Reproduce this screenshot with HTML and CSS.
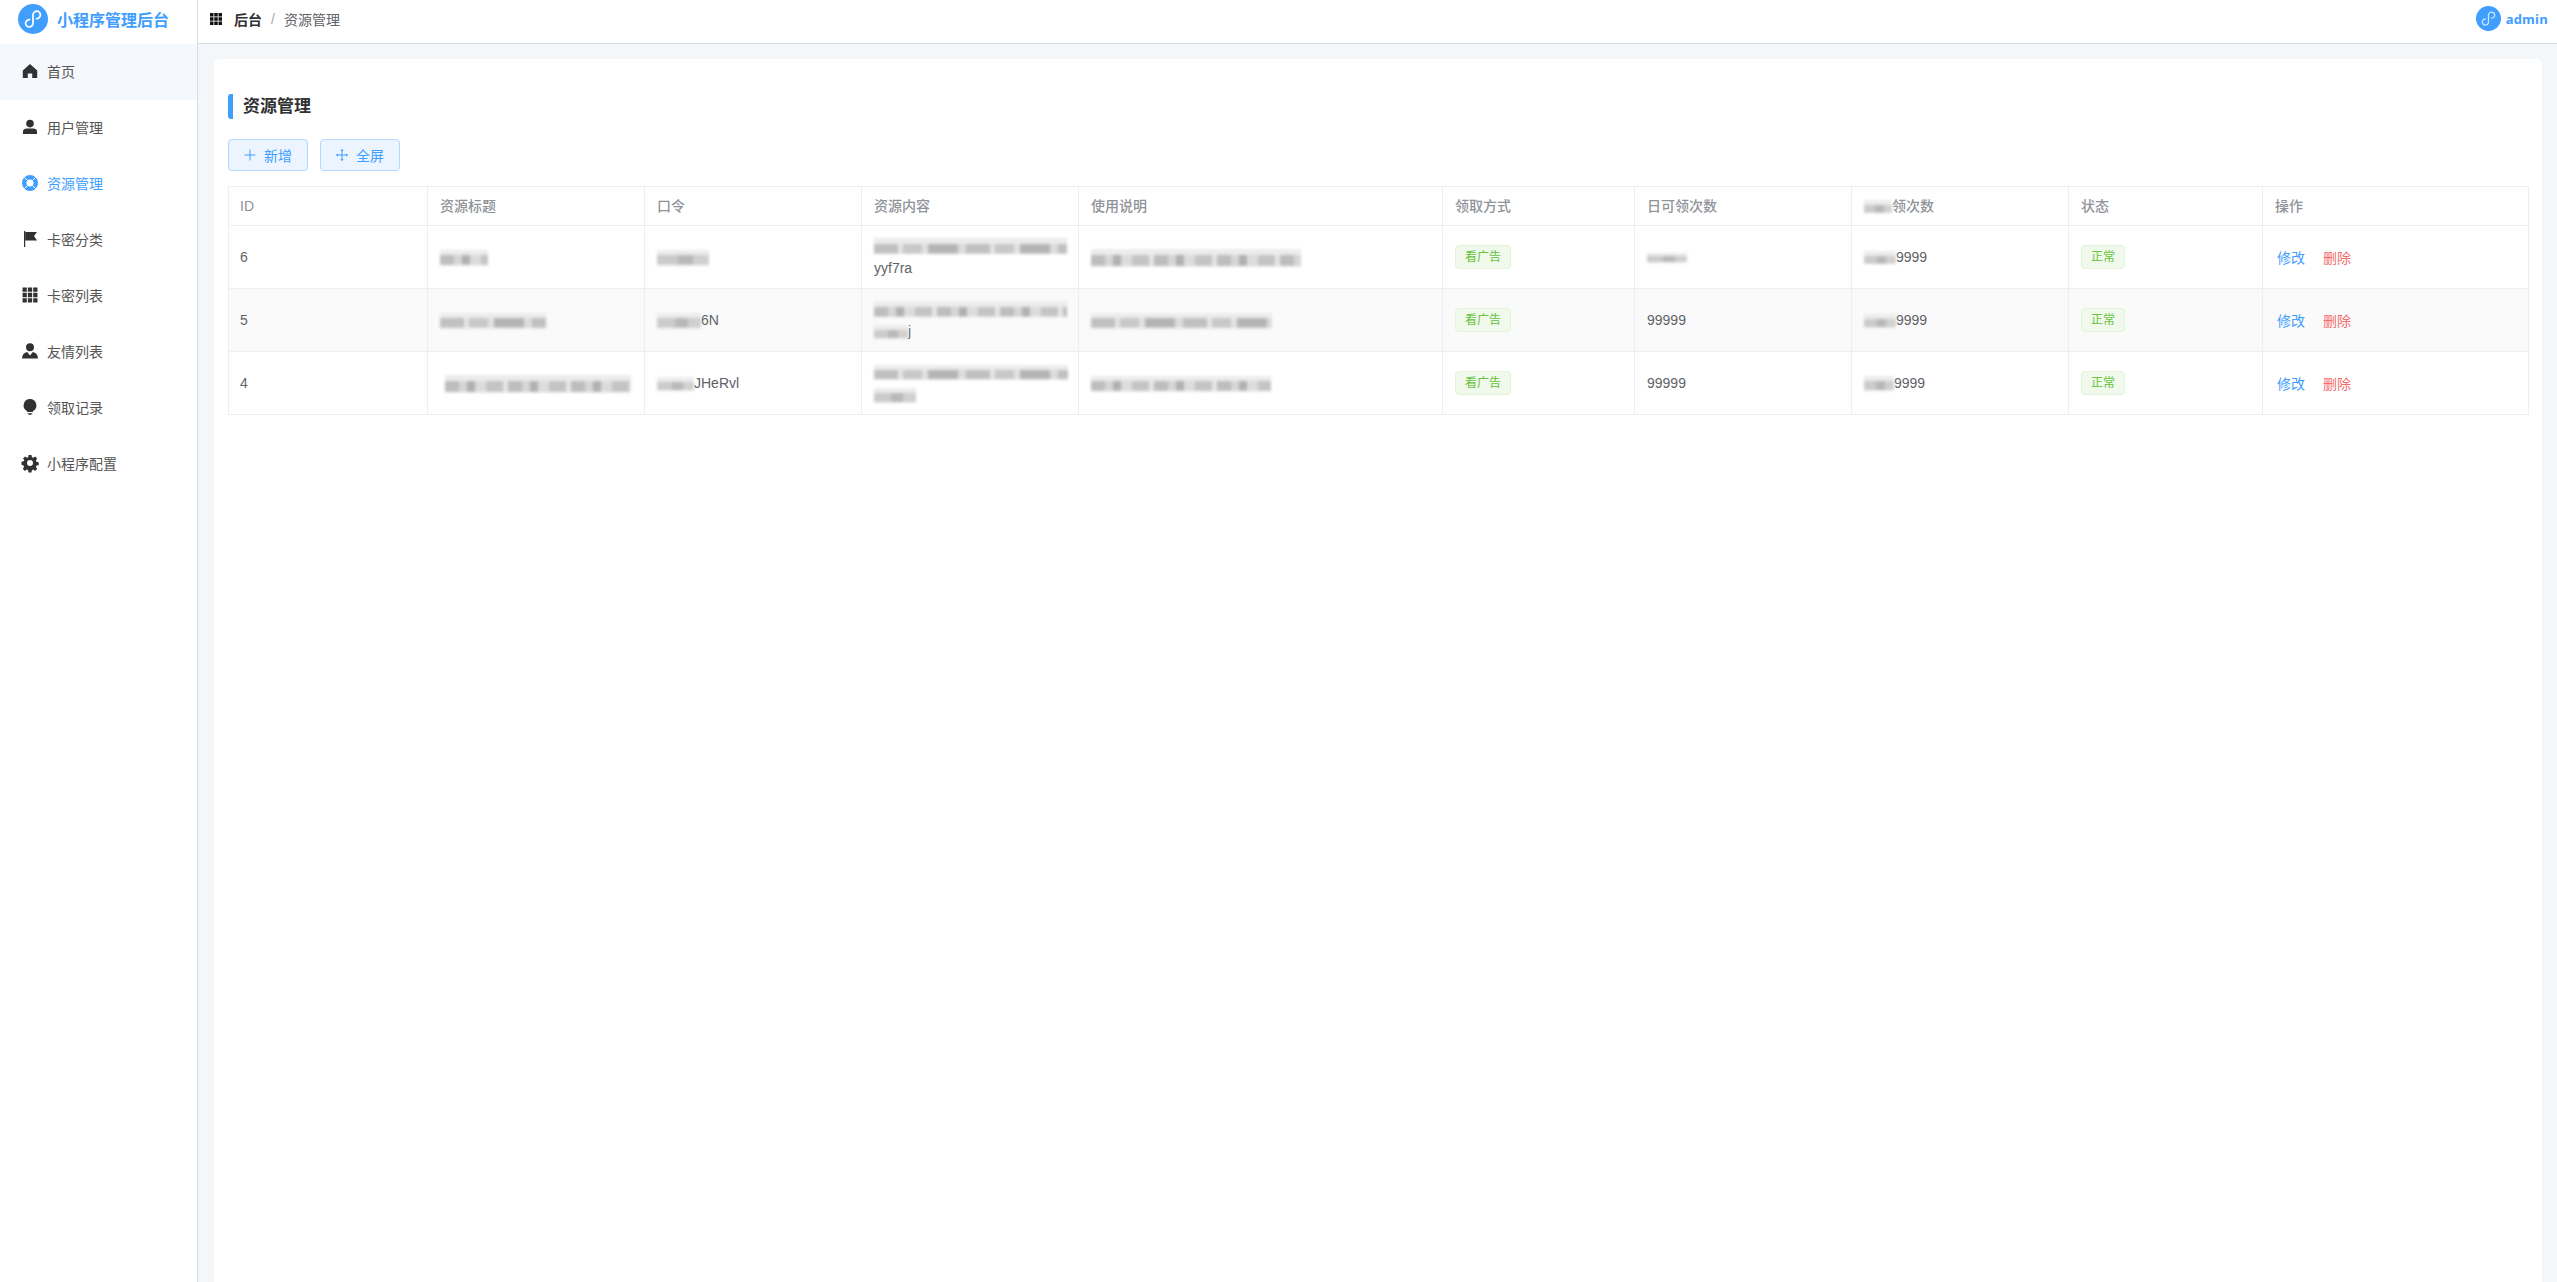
FILE: index.html
```html
<!DOCTYPE html>
<html lang="zh-CN">
<head>
<meta charset="utf-8">
<title>资源管理</title>
<link rel="stylesheet" href="styles.css">
</head>
<body>
<div class="app">
  <aside class="sidebar">
    <div class="brand">
      <svg class="logo" viewBox="0 0 30 30"><circle cx="15" cy="15" r="15" fill="#409eff"/><path d="M11.500 15.600a3.700 3.700 0 1 0 3.500 3.700v-8.400a3.700 3.700 0 1 1 3.500 3.700" fill="none" stroke="#fff" stroke-width="1.700" stroke-linecap="round"/></svg>
      <span class="brand-name">小程序管理后台</span>
    </div>
    <nav class="menu">
      <a class="menu-item is-home"><svg class="mi" viewBox="0 0 16 16"><path d="M8 1 .8 7.600V15h5v-4.600h4.400V15h5V7.600z"/></svg><span>首页</span></a>
      <a class="menu-item"><svg class="mi" viewBox="0 0 16 16"><circle cx="8" cy="4.600" r="3.800"/><path d="M1 15v-2.400C1 10.400 3 9.600 4.600 9.600h6.800c1.600 0 3.600.8 3.600 3V15z"/></svg><span>用户管理</span></a>
      <a class="menu-item is-active"><svg class="mi" viewBox="0 0 16 16"><path fill-rule="evenodd" d="M8 0a8 8 0 1 1 0 16A8 8 0 0 1 8 0zm0 4.500a3.500 3.500 0 1 0 0 7 3.500 3.500 0 0 0 0-7z"/><path d="M2.500 2.500l3 3M13.500 2.500l-3 3M2.500 13.500l3-3M13.500 13.500l-3-3" stroke="#fff" stroke-width="1"/></svg><span>资源管理</span></a>
      <a class="menu-item"><svg class="mi" viewBox="0 0 16 16"><path d="M2 0h1.200v16H2z"/><path d="M3.200 1H15l-3 4 3 4.500H3.200z"/></svg><span>卡密分类</span></a>
      <a class="menu-item"><svg class="mi" viewBox="0 0 15 15"><path d="M.5.500h4v4h-4zM5.500.500h4v4h-4zM10.500.500h4v4h-4zM.5 5.500h4v4h-4zM5.500 5.500h4v4h-4zM10.500 5.500h4v4h-4zM.5 10.500h4v4h-4zM5.500 10.500h4v4h-4zM10.500 10.500h4v4h-4z"/></svg><span>卡密列表</span></a>
      <a class="menu-item"><svg class="mi" viewBox="0 0 16 16"><circle cx="8" cy="4.200" r="4"/><path d="M0 15.500c.4-4 2-6 5.200-6.500L8 12.500 10.800 9c3.200.5 4.800 2.500 5.200 6.500z"/></svg><span>友情列表</span></a>
      <a class="menu-item"><svg class="mi" viewBox="0 0 16 16"><path d="M8 0a6.400 6.400 0 0 1 3.400 11.800c-.4.300-.6.700-.6 1.200H5.200c0-.5-.2-.9-.6-1.200A6.400 6.400 0 0 1 8 0z"/><path d="M5.600 14h4.800v.8H5.600zM6.500 15.300h3V16h-3z"/></svg><span>领取记录</span></a>
      <a class="menu-item"><svg class="mi" viewBox="0 0 16 16"><path fill-rule="evenodd" d="M6.500 0h3l.4 2.200 1.300.6L13.100 1.500l2.100 2.100-1.300 1.900.6 1.300 2.200.4v3l-2.200.4-.6 1.300 1.300 1.900-2.100 2.100-1.900-1.300-1.300.6-.4 2.200h-3l-.4-2.200-1.300-.6-1.900 1.300-2.100-2.100 1.300-1.900-.6-1.300L-.5 9.700v-3l2.200-.4.6-1.300L1 3.600l2.100-2.100 1.900 1.300 1.300-.6zM8 5a3 3 0 1 0 0 6 3 3 0 0 0 0-6z"/></svg><span>小程序配置</span></a>
    </nav>
  </aside>
  <main class="main">
    <header class="topbar">
      <div class="crumbs">
        <svg class="crumb-icon" viewBox="0 0 12 12"><path d="M0 0h3.500v3.500H0zM4.250 0h3.500v3.500h-3.500zM8.500 0H12v3.500H8.500zM0 4.250h3.500v3.500H0zM4.250 4.250h3.500v3.500h-3.500zM8.500 4.250H12v3.500H8.500zM0 8.500h3.500V12H0zM4.250 8.500h3.500V12h-3.500zM8.500 8.500H12V12H8.500z"/></svg>
        <b class="crumb-root">后台</b><span class="crumb-sep">/</span><span class="crumb-cur">资源管理</span>
      </div>
      <div class="account">
        <svg class="avatar" viewBox="0 0 30 30"><circle cx="15" cy="15" r="15" fill="#409eff"/><path d="M11.500 15.600a3.700 3.700 0 1 0 3.500 3.700v-8.400a3.700 3.700 0 1 1 3.500 3.700" fill="none" stroke="#cfe6ff" stroke-width="1.500" stroke-linecap="round"/></svg>
        <span class="account-name">admin</span>
      </div>
    </header>
    <section class="content">
      <div class="card">
        <h1 class="title">资源管理</h1>
        <div class="toolbar">
          <button class="btn"><svg class="btn-icon" viewBox="0 0 12 12"><path d="M6 .5v11M.5 6h11" stroke="#409eff" stroke-width="1" fill="none"/></svg>新增</button>
          <button class="btn"><svg class="btn-icon" viewBox="0 0 12 12"><path d="M6 .5v11M.5 6h11" stroke="#409eff" stroke-width="1" fill="none"/><path d="M6 0 4.400 2h3.200zM6 12l-1.600-2h3.200zM0 6l2-1.600v3.200zM12 6l-2-1.600v3.200z" fill="#409eff"/></svg>全屏</button>
        </div>
        <table class="grid">
          <colgroup>
            <col class="c1"><col class="c2"><col class="c2"><col class="c2"><col class="c5"><col class="c6"><col class="c2"><col class="c2"><col class="c9"><col class="c10">
          </colgroup>
          <thead>
            <tr><th>ID</th><th>资源标题</th><th>口令</th><th>资源内容</th><th>使用说明</th><th>领取方式</th><th>日可领次数</th><th><i class="m w28 h13 p2"></i>领次数</th><th>状态</th><th>操作</th></tr>
          </thead>
          <tbody>
            <tr>
              <td>6</td>
              <td><i class="m w48 p1"></i></td>
              <td><i class="m w52 p2"></i></td>
              <td><i class="m w193 p3"></i><br>yyf7ra</td>
              <td><i class="m w210 h18 p1"></i></td>
              <td><span class="tag">看广告</span></td>
              <td><i class="m w40 h10 p2"></i></td>
              <td><i class="m w32 h13 p2"></i>9999</td>
              <td><span class="tag">正常</span></td>
              <td><a class="act edit">修改</a><a class="act del">删除</a></td>
            </tr>
            <tr class="even">
              <td>5</td>
              <td><i class="m w106 p3"></i></td>
              <td><i class="m w44 p2"></i>6N</td>
              <td><i class="m w193 p1"></i><br><i class="m w34 h14 p2"></i>j</td>
              <td><i class="m w181 p3"></i></td>
              <td><span class="tag">看广告</span></td>
              <td>99999</td>
              <td><i class="m w32 h14 p2"></i>9999</td>
              <td><span class="tag">正常</span></td>
              <td><a class="act edit">修改</a><a class="act del">删除</a></td>
            </tr>
            <tr>
              <td>4</td>
              <td><i class="m w186 h18 ml5 p1"></i></td>
              <td><i class="m w37 h14 p2"></i>JHeRvl</td>
              <td><i class="m w194 h15 p3"></i><br><i class="m w42 h15 p2"></i></td>
              <td><i class="m w180 p1"></i></td>
              <td><span class="tag">看广告</span></td>
              <td>99999</td>
              <td><i class="m w30 h15 p2"></i>9999</td>
              <td><span class="tag">正常</span></td>
              <td><a class="act edit">修改</a><a class="act del">删除</a></td>
            </tr>
          </tbody>
        </table>
      </div>
    </section>
  </main>
</div>
</body>
</html>
```

FILE: styles.css
```css
* { box-sizing: border-box; }
html, body { height: 100%; margin: 0; }
body {
  font-family: "Liberation Sans", "Noto Sans CJK SC", sans-serif;
  font-size: 14px;
  color: #606266;
  background: #f4f7f9;
  overflow: hidden;
}
.app { display: flex; height: 100vh; }

/* sidebar */
.sidebar {
  flex: 0 0 198px;
  background: #fff;
  border-right: 1px solid #d8dce5;
}
.brand {
  height: 44px;
  display: flex;
  align-items: center;
  gap: 9px;
  padding: 0 0 6px 18px;
}
.logo { width: 30px; height: 30px; flex: none; }
.brand-name { font-size: 16px; font-weight: 700; color: #409eff; white-space: nowrap; }
.menu { display: flex; flex-direction: column; }
.menu-item {
  height: 56px;
  display: flex;
  align-items: center;
  gap: 9px;
  padding: 0 0 2px 22px;
  color: #555;
  font-size: 14px;
}
.menu-item.is-home { background: #f5f8fd; }
.menu-item.is-active { color: #409eff; }
.mi { width: 16px; height: 16px; flex: none; fill: #303133; overflow: visible; }
.is-active .mi { fill: #409eff; }

/* top bar */
.main { flex: 1; min-width: 0; display: flex; flex-direction: column; }
.topbar {
  flex: 0 0 44px;
  background: #fff;
  border-bottom: 1px solid #d8dce5;
  display: flex;
  align-items: center;
  justify-content: space-between;
  padding: 0 9px 6px 12px;
}
.crumbs { display: flex; align-items: center; }
.crumb-icon { width: 12px; height: 12px; fill: #111; margin-right: 12px; }
.crumb-root { font-weight: 700; color: #303133; }
.crumb-sep { color: #aaa; margin: 0 9px; }
.crumb-cur { color: #606266; }
.account { display: flex; align-items: center; gap: 5px; }
.avatar { width: 25px; height: 25px; }
.account-name { font-weight: 700; font-family: "Open Sans", "Liberation Sans", sans-serif; font-size: 13px; color: #409eff; letter-spacing: .2px; }

/* card */
.content { flex: 1; min-height: 0; padding: 15px 15px 0 16px; }
.card {
  height: 100%;
  background: #fff;
  border-radius: 6px 6px 0 0;
  padding: 35px 14px 0;
}
.title {
  margin: 0;
  height: 25px;
  line-height: 25px;
  padding-left: 10px;
  border-left: 5px solid #409eff;
  border-radius: 3px 0 0 3px;
  font-size: 17px;
  font-weight: 700;
  color: #303133;
}
.toolbar { display: flex; gap: 12px; margin: 20px 0 15px; }
.btn {
  width: 80px;
  height: 32px;
  display: flex;
  align-items: center;
  justify-content: center;
  gap: 8px;
  padding: 0;
  background: #ecf5ff;
  border: 1px solid #b3d8ff;
  border-radius: 4px;
  color: #409eff;
  font: inherit;
}
.btn-icon { width: 12px; height: 12px; }

/* table */
.grid { width: 2300px; table-layout: fixed; border-collapse: collapse; line-height: 23px; }
.c1 { width: 199px; }
.c2 { width: 217px; }
.c5 { width: 364px; }
.c6 { width: 192px; }
.c9 { width: 194px; }
.c10 { width: 266px; }
.grid th, .grid td {
  border: 1px solid #ebeef5;
  padding: 0 12px;
  text-align: left;
  vertical-align: middle;
  white-space: nowrap;
}
.grid th:first-child, .grid td:first-child { padding-left: 11px; }
.grid th { height: 39px; font-weight: 500; color: #909399; }
.grid td { height: 63px; }
.even td { background: #fafafa; }
.tag {
  display: inline-block;
  height: 24px;
  line-height: 22px;
  padding: 0 9px;
  font-size: 12px;
  color: #67c23a;
  background: #f0f9eb;
  border: 1px solid #e1f3d8;
  border-radius: 4px;
}
.act { display: inline-block; margin-top: 3px; }
.edit { color: #409eff; margin-left: 2px; margin-right: 18px; }
.del { color: #f56c6c; }

/* redacted (mosaic) text */
.m {
  display: inline-block;
  height: 16px;
  vertical-align: middle;
  filter: blur(1.5px);
  background-color: #ececec;
  background-size: 100% 60%;
  background-position: 0 85%;
  background-repeat: no-repeat;
}
.p1 { background-image: repeating-linear-gradient(90deg, #bdbdbd 0 14px, #d6d6d6 14px 22px, #b0b0b0 22px 30px, #dcdcdc 30px 41px, #c4c4c4 41px 58px, #e6e6e6 58px 63px); }
.p2 { background-image: linear-gradient(90deg, #cbcbcb 0 40%, #b8b8b8 40% 70%, #d0d0d0 70% 100%); }
.p3 { background-image: repeating-linear-gradient(90deg, #c0c0c0 0 24px, #e4e4e4 24px 29px, #c8c8c8 29px 48px, #e2e2e2 48px 54px, #b4b4b4 54px 84px, #dcdcdc 84px 92px); }
.h10 { height: 10px; }
.h13 { height: 13px; }
.h14 { height: 14px; }
.h15 { height: 15px; }
.h18 { height: 18px; }
.ml5 { margin-left: 5px; }
.w28 { width: 28px; }
.w30 { width: 30px; }
.w32 { width: 32px; }
.w34 { width: 34px; }
.w37 { width: 37px; }
.w40 { width: 40px; }
.w42 { width: 42px; }
.w44 { width: 44px; }
.w48 { width: 48px; }
.w52 { width: 52px; }
.w106 { width: 106px; }
.w180 { width: 180px; }
.w181 { width: 181px; }
.w186 { width: 186px; }
.w193 { width: 193px; }
.w194 { width: 194px; }
.w210 { width: 210px; }
```
